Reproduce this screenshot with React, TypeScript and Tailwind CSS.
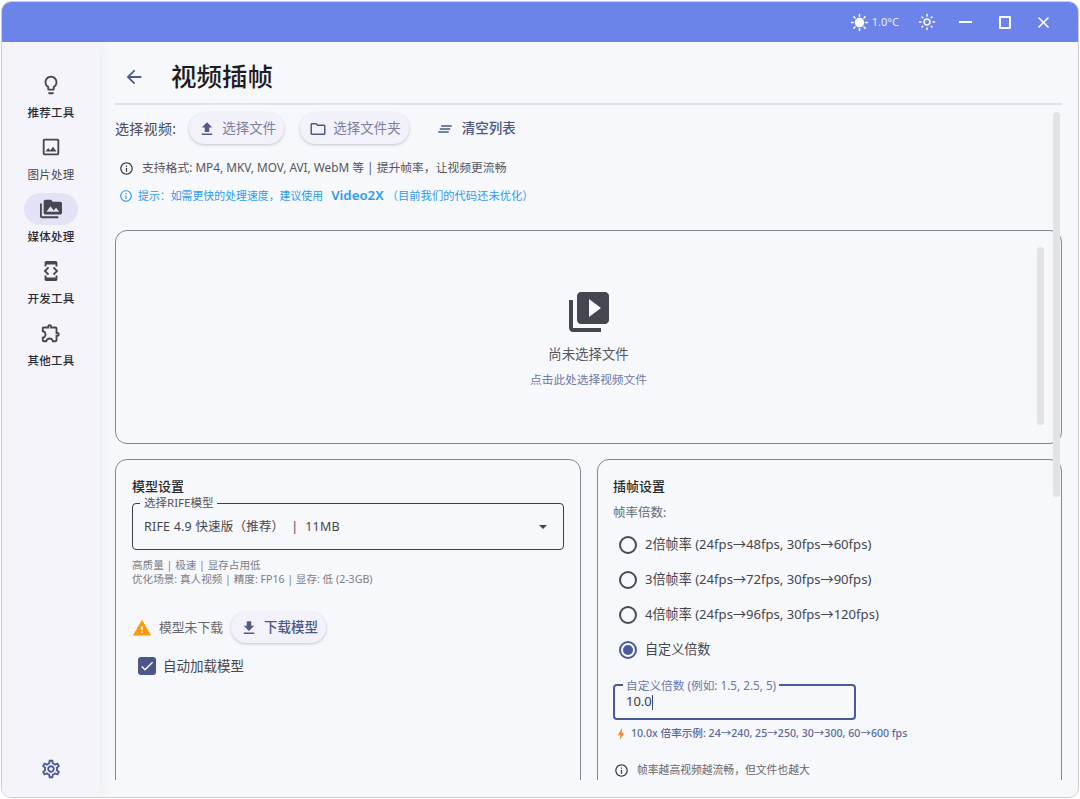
import {
  MdArrowBack,
  MdBolt,
  MdCheck,
  MdClearAll,
  MdClose,
  MdFileDownload,
  MdFileUpload,
  MdInfoOutline,
  MdLightbulbOutline,
  MdOutlineDeveloperMode,
  MdOutlineExtension,
  MdOutlineFolder,
  MdOutlineImage,
  MdOutlineLightMode,
  MdOutlineSettings,
  MdPermMedia,
  MdSunny,
  MdVideoLibrary,
  MdWarning,
} from 'react-icons/md'
import type { IconType } from 'react-icons'

const navItems: { label: string; icon: IconType; bold?: boolean; active?: boolean }[] = [
  { label: '推荐工具', icon: MdLightbulbOutline, bold: true },
  { label: '图片处理', icon: MdOutlineImage },
  { label: '媒体处理', icon: MdPermMedia, bold: true, active: true },
  { label: '开发工具', icon: MdOutlineDeveloperMode, bold: true },
  { label: '其他工具', icon: MdOutlineExtension, bold: true },
]

const rates = [
  '2倍帧率 (24fps→48fps, 30fps→60fps)',
  '3倍帧率 (24fps→72fps, 30fps→90fps)',
  '4倍帧率 (24fps→96fps, 30fps→120fps)',
]

const PillButton = ({ icon: Icon, label, strong }: { icon: IconType; label: string; strong?: boolean }) => (
  <button className={`flex h-[31px] items-center rounded-full bg-[#f3f1f9] pl-[9px] pr-[8px] shadow-[0_1px_3px_rgba(60,60,90,0.28)] ${strong ? 'font-medium text-[#4a5788]' : 'text-[#7a7fa3]'}`}>
    <Icon className="mr-[6px] text-[#4f5b8f]" size={18} />
    <span className="text-[13.5px]">{label}</span>
  </button>
)

const Radio = ({ label, checked }: { label: string; checked?: boolean }) => (
  <div className="flex h-[35px] items-center pl-[6px]">
    <span className={`flex h-[18px] w-[18px] items-center justify-center rounded-full border-2 ${checked ? 'border-[#4a5a9a]' : 'border-[#4a4b52]'}`}>
      {checked && <span className="h-[10px] w-[10px] rounded-full bg-[#4a5a9a]" />}
    </span>
    <span className="ml-[8px] text-[13.1px] text-[#45464d]">{label}</span>
  </div>
)

export default function App() {
  return (
    <div className="h-[799px] w-[1080px] overflow-hidden bg-white p-px font-[family-name:'Noto_Sans','Noto_Sans_CJK_SC',sans-serif]">
      <div className="flex h-[797px] flex-col overflow-hidden rounded-[10px] border border-[#cfcfd3] bg-[#f7f8fb]">
        {/*title bar*/}
        <div className="flex h-[40px] shrink-0 items-center justify-end bg-[#6c84e9] pr-[15px] text-white">
          <MdSunny size={19} className="mr-[3px]" />
          <span className="mr-[8px] text-[11px] text-[#e8ecfd]">1.0°C</span>
          <span className="flex w-[39px] justify-center"><MdOutlineLightMode size={18} /></span>
          <span className="flex w-[39px] justify-center">
            <span className="h-[2px] w-[13px] bg-white" />
          </span>
          <span className="flex w-[39px] justify-center">
            <span className="h-[13px] w-[12px] rounded-[1px] border-2 border-white" />
          </span>
          <span className="flex w-[39px] justify-center"><MdClose size={19} /></span>
        </div>

        <div className="flex min-h-0 flex-1">
          {/*sidebar*/}
          <div className="z-10 flex w-[98px] shrink-0 flex-col items-center bg-[#f6f4fb] pt-[27px] pb-[17px] shadow-[3px_0_8px_rgba(90,90,110,0.05)]">
            {navItems.map(({ label, icon: Icon, bold, active }) => (
              <div key={label} className="flex h-[62px] flex-col items-center">
                <span className={`flex h-[32px] w-[54px] items-center justify-center rounded-full ${active ? 'bg-[#e2e3f7]' : ''}`}>
                  <Icon size={22} className="text-[#45464f]" />
                </span>
                <span className={`mt-[4px] text-[11.5px] leading-[16px] tracking-[0.2px] ${bold ? 'font-medium text-[#2b2c33]' : 'text-[#45464f]'}`}>{label}</span>
              </div>
            ))}
            <MdOutlineSettings size={22} className="mt-auto text-[#4a5a9a]" />
          </div>

          {/*main column*/}
          <div className="relative min-w-0 flex-1 pl-[15px] pr-[16px]">
            <div className="flex h-[63px] items-center border-b-2 border-[#e1e2ea] pl-[8px] pt-[8px]">
              <MdArrowBack size={22} className="text-[#4f5b8f]" />
              <h1 className="ml-[26px] text-[25.5px] font-medium leading-none text-[#1c1c22]">视频插帧</h1>
            </div>

            <div className="mt-[8px] flex items-center">
              <span className="mr-[13px] text-[14px] tracking-[0.3px] text-[#4a4b52]">选择视频:</span>
              <PillButton icon={MdFileUpload} label="选择文件" />
              <span className="w-[16px]" />
              <PillButton icon={MdOutlineFolder} label="选择文件夹" />
              <span className="ml-[27px] flex items-center font-medium text-[#4a5788]">
                <MdClearAll size={18} className="mr-[8px]" />
                <span className="text-[13.5px]">清空列表</span>
              </span>
            </div>

            <div className="mt-[14px] flex h-[20px] items-center pl-[4px] text-[11.8px] text-[#55565d]">
              <MdInfoOutline size={15} className="mr-[8px] text-[#3a3b42]" />
              支持格式: MP4, MKV, MOV, AVI, WebM 等 | 提升帧率，让视频更流畅
            </div>

            <div className="mt-[7px] flex h-[22px] items-center pl-[4px] text-[#2f9bf0]">
              <MdInfoOutline size={14} className="mr-[5px]" />
              <span className="text-[10.9px]">提示：如需更快的处理速度，建议使用</span>
              <span className="ml-[8px] text-[13.3px] font-semibold">Video2X</span>
              <span className="ml-[3px] text-[11.3px]">（目前我们的代码还未优化）</span>
            </div>

            {/*drop zone*/}
            <div className="mt-[23px] flex h-[214px] flex-col items-center rounded-[12px] border border-[#85868c] pt-[57px]">
              <MdVideoLibrary size={48} className="text-[#45464f]" />
              <span className="mt-[8px] text-[13.4px] leading-[20px] text-[#55565d]">尚未选择文件</span>
              <span className="mt-[7px] text-[11.7px] leading-[16px] text-[#6d79a8]">点击此处选择视频文件</span>
            </div>

            {/*settings cards*/}
            <div className="mt-[15px] flex h-[321px] gap-[16px] overflow-hidden">
              <div className="h-[400px] w-[466px] shrink-0 rounded-[12px] border border-[#85868c] px-[16px] pt-[16px]">
                <h2 className="text-[13px] font-medium leading-[20px] text-[#26272d]">模型设置</h2>
                <fieldset className="mt-[1px] h-[53px] rounded-[4px] border-[1.5px] border-[#3f4047] pl-[7px] pr-[16px]">
                  <legend className="px-[4px] text-[11.5px] leading-[12px] text-[#55565d]">选择RIFE模型</legend>
                  <div className="flex h-[35px] items-center justify-between pl-[4px] pt-[1px] text-[12.5px] tracking-[0.2px] text-[#45464d]">
                    <span>RIFE 4.9 快速版（推荐）&nbsp;&nbsp;|&nbsp;&nbsp;11MB</span>
                    <span className="h-0 w-0 border-x-[4.5px] border-t-[4.5px] border-x-transparent border-t-[#45464d]" />
                  </div>
                </fieldset>
                <p className="mt-[8px] text-[10.6px] leading-[14px] text-[#7c7d84]">
                  高质量 | 极速 | 显存占用低
                  <br />
                  优化场景: 真人视频 | 精度: FP16 | 显存: 低 (2-3GB)
                </p>
                <div className="mt-[26px] flex h-[31px] items-center">
                  <MdWarning size={20} className="text-[#fb9a0c]" />
                  <span className="ml-[7px] text-[12.8px] text-[#66676e]">模型未下载</span>
                  <span className="ml-[8px]"><PillButton icon={MdFileDownload} label="下载模型" strong /></span>
                </div>
                <label className="mt-[13px] flex items-center pl-[6px]">
                  <span className="flex h-[18px] w-[18px] items-center justify-center rounded-[3px] bg-[#4a5788]">
                    <MdCheck size={16} className="text-white" />
                  </span>
                  <span className="ml-[7px] text-[13.5px] text-[#45464d]">自动加载模型</span>
                </label>
              </div>

              <div className="h-[400px] flex-1 rounded-[12px] border border-[#85868c] px-[15px] pt-[16px]">
                <h2 className="text-[13px] font-medium leading-[20px] text-[#26272d]">插帧设置</h2>
                <div className="mt-[7px] text-[12.5px] leading-[20px] text-[#66676e]">帧率倍数:</div>
                <div className="mt-[4px]">
                  {rates.map(rate => <Radio key={rate} label={rate} />)}
                  <Radio label="自定义倍数" checked />
                </div>
                <fieldset className="mt-[12px] h-[41px] w-[243px] rounded-[4px] border-2 border-[#4a5a9a] pl-[8px]">
                  <legend className="px-[3px] text-[11.7px] leading-[12px] text-[#6b78ad]">自定义倍数 (例如: 1.5, 2.5, 5)</legend>
                  <div className="flex h-[22px] items-center pl-[3px] text-[13px] text-[#3a3b42]">
                    10.0<span className="ml-[0.5px] h-[15px] w-px bg-[#3a4a8a]" />
                  </div>
                </fieldset>
                <div className="mt-[6px] flex h-[16px] items-center pl-[1px] text-[10.6px] font-medium text-[#5a68a0]">
                  <MdBolt size={14} className="text-[#f58a2c]" />
                  <span className="ml-[3px]">10.0x 倍率示例: 24→240, 25→250, 30→300, 60→600 fps</span>
                </div>
                <div className="mt-[19px] flex h-[18px] items-center pl-[1px] text-[10.8px] text-[#66676e]">
                  <MdInfoOutline size={15} className="text-[#3a3b42]" />
                  <span className="ml-[8px]">帧率越高视频越流畅，但文件也越大</span>
                </div>
              </div>
            </div>

            {/*scroll thumbs*/}
            <span className="absolute left-[953px] top-[70px] h-[385px] w-[7px] rounded-full bg-[#e3e3e7]" />
            <span className="absolute left-[937px] top-[205px] h-[178px] w-[7px] rounded-full bg-[#e3e3e7]" />
          </div>
        </div>
      </div>
    </div>
  )
}
